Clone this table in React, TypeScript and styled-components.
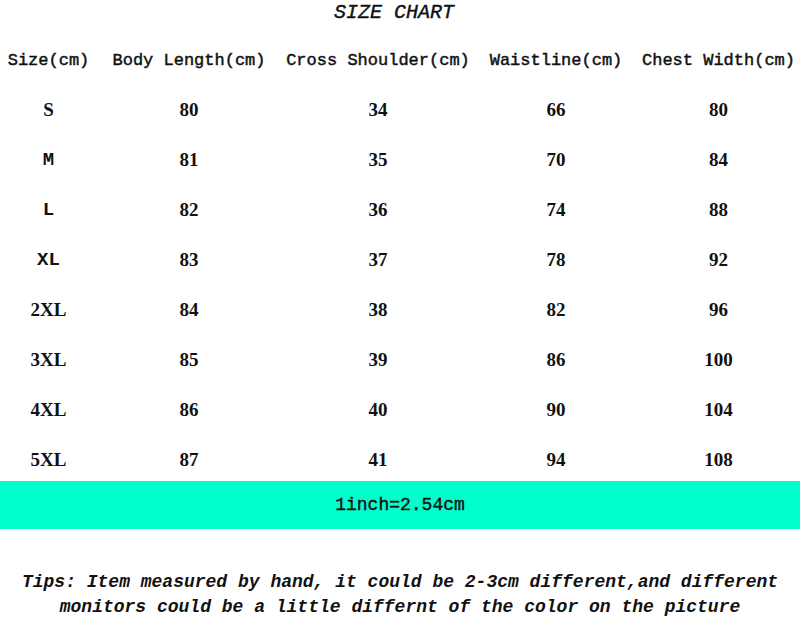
import React from "react";
import styled, { createGlobalStyle } from "styled-components";

const Global = createGlobalStyle`
  html, body { margin: 0; padding: 0; background: #ffffff; }
  body { width: 800px; height: 623px; overflow: hidden; color: #111; }
`;

const Page = styled.div`
  width: 800px;
  display: flex;
  flex-direction: column;
`;

const Title = styled.h1`
  margin: 0;
  padding-right: 12px;
  height: 26px;
  line-height: 26px;
  text-align: center;
  font-family: "Liberation Mono", monospace;
  font-style: italic;
  font-weight: normal;
  font-size: 20px;
  color: #111;
  -webkit-text-stroke: 0.4px #111;
`;

const Grid = styled.div`
  display: grid;
  grid-template-columns: 97px 184px 194px 162px 163px;
  align-items: center;
`;

const HeaderRow = styled(Grid)`
  margin-top: 22px;
  height: 26px;
`;

const HeaderCell = styled.div`
  text-align: center;
  white-space: nowrap;
  font-family: "Liberation Mono", monospace;
  font-size: 17px;
  line-height: 26px;
  color: #111;
  -webkit-text-stroke: 0.45px #111;
`;

const Body = styled.div`
  display: flex;
  flex-direction: column;
  gap: 28px;
  padding-top: 25px;
`;

const DataRow = styled(Grid)`
  height: 22px;
`;

const Cell = styled.div<{ $mono?: boolean }>`
  text-align: center;
  white-space: nowrap;
  font-family: ${(p) =>
    p.$mono ? `"Liberation Mono", monospace` : `"Liberation Serif", serif`};
  font-weight: bold;
  font-size: 19px;
  line-height: 22px;
  color: #111;
`;

const Bar = styled.div`
  margin-top: 10px;
  height: 48px;
  background: #00ffcc;
  display: flex;
  align-items: center;
  justify-content: center;
  font-family: "Liberation Mono", monospace;
  font-size: 18px;
  color: #111;
  -webkit-text-stroke: 0.4px #111;
`;

const Tips = styled.p`
  margin: 41px 0 0;
  text-align: center;
  font-family: "Liberation Mono", monospace;
  font-style: italic;
  font-weight: bold;
  font-size: 18px;
  line-height: 25px;
  color: #111;
  white-space: pre;
`;

const headers = [
  "Size(cm)",
  "Body Length(cm)",
  "Cross Shoulder(cm)",
  "Waistline(cm)",
  "Chest Width(cm)",
];

const rows: { size: string; monoSize: boolean; values: number[] }[] = [
  { size: "S", monoSize: false, values: [80, 34, 66, 80] },
  { size: "M", monoSize: true, values: [81, 35, 70, 84] },
  { size: "L", monoSize: true, values: [82, 36, 74, 88] },
  { size: "XL", monoSize: true, values: [83, 37, 78, 92] },
  { size: "2XL", monoSize: false, values: [84, 38, 82, 96] },
  { size: "3XL", monoSize: false, values: [85, 39, 86, 100] },
  { size: "4XL", monoSize: false, values: [86, 40, 90, 104] },
  { size: "5XL", monoSize: false, values: [87, 41, 94, 108] },
];

export default function App() {
  return (
    <>
      <Global />
      <Page>
        <Title>SIZE CHART</Title>
        <HeaderRow>
          {headers.map((h) => (
            <HeaderCell key={h}>{h}</HeaderCell>
          ))}
        </HeaderRow>
        <Body>
          {rows.map((r) => (
            <DataRow key={r.size}>
              <Cell $mono={r.monoSize}>{r.size}</Cell>
              {r.values.map((v, i) => (
                <Cell key={i}>{v}</Cell>
              ))}
            </DataRow>
          ))}
        </Body>
        <Bar>1inch=2.54cm</Bar>
        <Tips>
          {"Tips: Item measured by hand, it could be 2-3cm different,and different\nmonitors could be a little differnt of the color on the picture"}
        </Tips>
      </Page>
    </>
  );
}
